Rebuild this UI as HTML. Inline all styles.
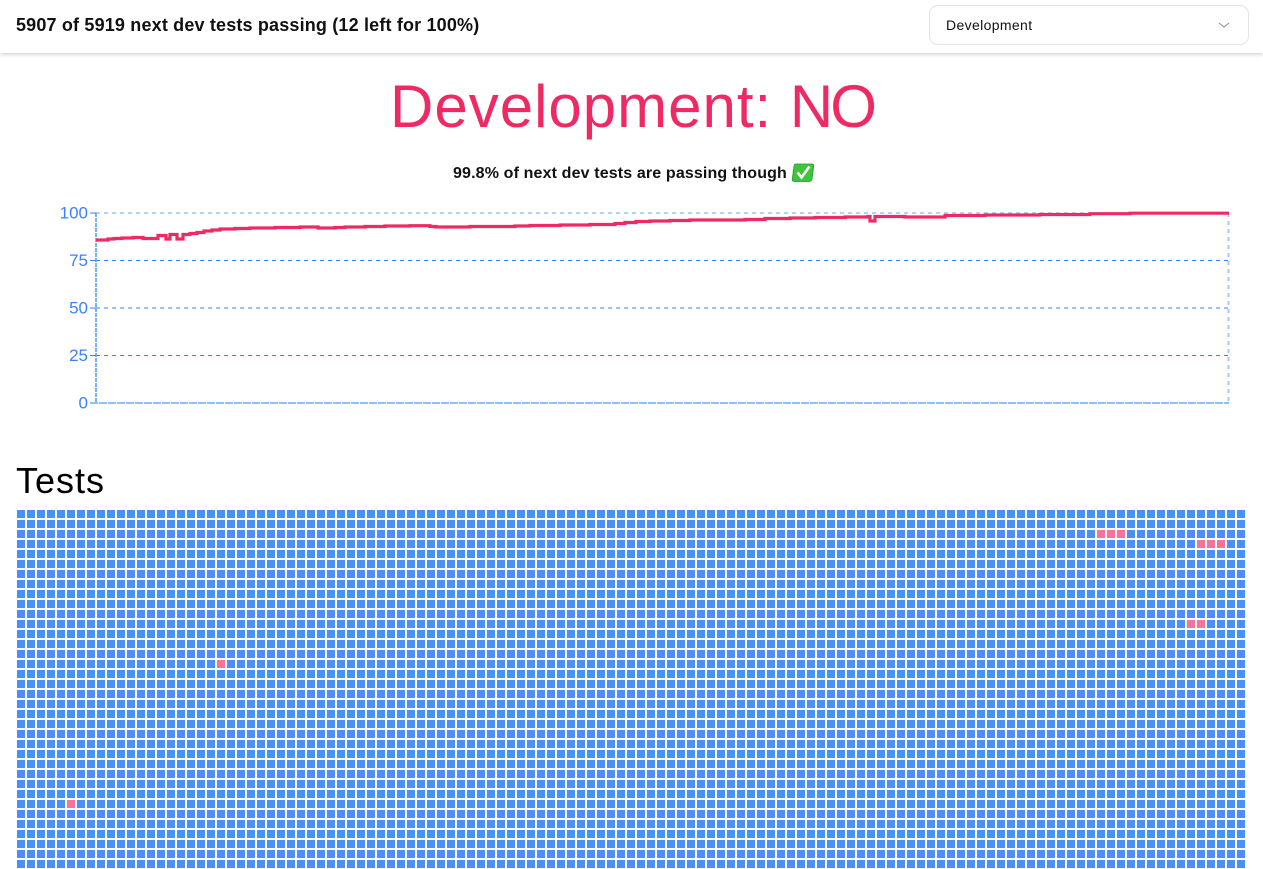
<!DOCTYPE html>
<html lang="en">
<head>
<meta charset="utf-8">
<title>Development</title>
<style>
html,body{margin:0;padding:0;width:1263px;height:869px;overflow:hidden;background:#fff;font-family:"Liberation Sans",sans-serif;color:#000}
.abs{position:absolute;white-space:nowrap}
#bar{position:absolute;left:0;top:0;width:1263px;height:53px;background:#fff;box-shadow:0 1px 4px rgba(0,0,0,.22)}
#sel{position:absolute;left:929px;top:5px;width:318px;height:38px;border:1px solid #e4e4e7;border-radius:9px;background:#fff}
#grid{position:absolute;left:17px;top:510px;width:1228px;height:359px;background-color:#4a90f8;background-image:linear-gradient(to right,transparent 8px,#fff 8px),linear-gradient(to bottom,transparent 8px,#fff 8px);background-size:10px 10px}
#grid i{position:absolute;width:8px;height:8px;background:#f87399}
</style>
</head>
<body>
<div id="bar"></div>
<div class="abs" style="left:16px;top:15px;font-size:18px;line-height:20px;font-weight:bold;letter-spacing:.17px;color:#111">5907 of 5919 next dev tests passing (12 left for 100%)</div>
<div id="sel"></div>
<div class="abs" style="left:946px;top:17px;font-size:14px;line-height:17px;letter-spacing:.36px;color:#111">Development</div>
<svg class="abs" style="left:1216px;top:20px" width="16" height="12" viewBox="0 0 16 12"><path d="M3 3L8 7L13 3" fill="none" stroke="#8a8a90" stroke-width="1"/></svg>

<div class="abs" style="left:390px;top:71px;font-size:60px;line-height:72px;letter-spacing:1px;color:#ee2a64">Development: <span style="letter-spacing:-3px">NO</span></div>

<div class="abs" style="left:453px;top:164px;font-size:16px;line-height:19px;font-weight:bold;letter-spacing:.14px;color:#111">99.8% of next dev tests are passing though</div>
<svg class="abs" style="left:791px;top:162px" width="24" height="21" viewBox="0 0 24 21">
<path d="M5 2H21Q23 2 22.700 4L21 17Q20.700 19.500 18 19.500H3.500Q1 19.500 1.300 17L3 4Q3.200 2 5 2Z" fill="#3fc43b" stroke="#1f9a2b" stroke-width=".8"/>
<path d="M6.500 10.500L10.500 15.500L18.500 4.500" fill="none" stroke="#fff" stroke-width="2.600"/>
</svg>

<svg class="abs" style="left:0;top:195px" width="1263" height="225" viewBox="0 195 1263 225">
<g stroke="#3b82f6" fill="none">
<path d="M96 213H1229" stroke="#60a5fa" stroke-width="1.500" stroke-dasharray="4 4" stroke-opacity=".65"/>
<path d="M96 260.500H1229M96 308H1229M96 355.500H1229" stroke-width="1" stroke-dasharray="4 4"/>
<path d="M96 213V403" stroke="#60a5fa" stroke-width="2" stroke-dasharray="4 1" stroke-opacity=".85"/>
<path d="M1228.500 213V403" stroke="#60a5fa" stroke-width="2" stroke-dasharray="4 4" stroke-opacity=".6"/>
<path d="M90 403H1229" stroke="#60a5fa" stroke-width="2" stroke-dasharray="8 1" stroke-opacity=".7"/>
<path d="M90 213H96M90 260.500H96M90 308H96M90 355.500H96" stroke-width="1"/>
</g>
<g fill="#3b82f6" font-size="17" text-anchor="end" font-family="'Liberation Sans',sans-serif">
<text x="88" y="218.500">100</text>
<text x="88" y="266">75</text>
<text x="88" y="313.500">50</text>
<text x="88" y="361">25</text>
<text x="88" y="408.500">0</text>
</g>
<path fill="none" stroke="#ee2a64" stroke-width="3.200" d="M96 240H108V239H114V238.500H122V238H133V237.500H143V238.500H158V235.500H166V239H170V234.500H177V239H183V234.500H190V233.500H197V232.500H204V231H212V230H220V229H235V228.500H250V228H275V227.500H300V227H318V228H335V227.500H345V227H365V226.500H385V226H410V225.700H430V226.500H436V227H470V226.500H515V226H530V225.500H560V225H590V224.500H615V223.500H625V222.500H636V221.500H650V221H670V220.500H690V220H745V219.500H765V218.500H790V218H815V217.500H845V217H868V216.500H870V221H875V216.500H905V217H945V215.500H985V215H1040V214.500H1090V213.700H1130V213.200H1229"/>
</svg>

<div class="abs" style="left:16px;top:460px;font-size:36px;line-height:42px;letter-spacing:1px;color:#000">Tests</div>

<div id="grid">
<i style="left:1080px;top:20px"></i><i style="left:1090px;top:20px"></i><i style="left:1100px;top:20px"></i>
<i style="left:1180px;top:30px"></i><i style="left:1190px;top:30px"></i><i style="left:1200px;top:30px"></i>
<i style="left:1170px;top:110px"></i><i style="left:1180px;top:110px"></i>
<i style="left:200px;top:150px"></i>
<i style="left:50px;top:290px"></i>
</div>
</body>
</html>
